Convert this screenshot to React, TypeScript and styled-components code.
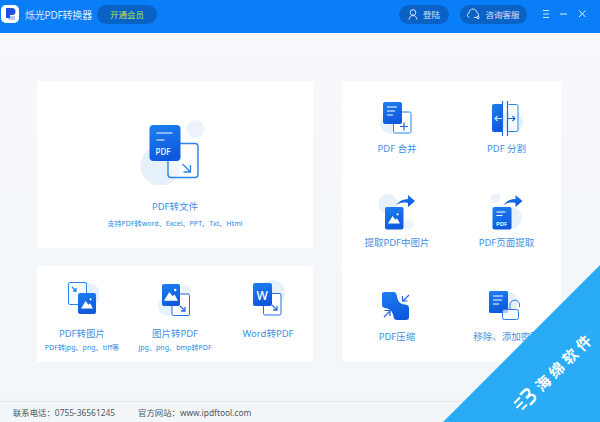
import * as React from 'react';
import styled, { createGlobalStyle } from 'styled-components';

const GlobalStyle = createGlobalStyle`
  html, body {
    margin: 0;
    padding: 0;
    background: #f3f6f9;
  }
  body {
    font-family: "Noto Sans", "Noto Sans CJK SC", sans-serif;
  }
`;

const Window = styled.div`
  background: linear-gradient(180deg, #f7f9fc 0%, #f2f6f8 100%);
  display: flex;
  flex-direction: column;
  height: 422px;
  overflow: hidden;
  position: relative;
  width: 600px;
`;

const Header = styled.header`
  align-items: center;
  background: #0a7df9;
  display: flex;
  flex: 0 0 33px;
  height: 33px;
  padding: 0 12px 5px 1px;
  box-sizing: border-box;
`;

const Logo = styled.div`
  align-items: center;
  background: #fff;
  border-radius: 5px;
  display: flex;
  height: 18px;
  justify-content: center;
  width: 18px;
`;

const Title = styled.span`
  color: #d9ebff;
  font-size: 10px;
  letter-spacing: -0.2px;
  margin-left: 6px;
  white-space: nowrap;
`;

const Pill = styled.div<{ $width: number; $ml: number }>`
  align-items: center;
  background: #0a62c6;
  border-radius: 10px;
  color: #cfe3fb;
  display: flex;
  flex: none;
  font-size: 8.5px;
  gap: 5px;
  height: 19px;
  justify-content: center;
  margin-left: ${({ $ml }) => $ml}px;
  width: ${({ $width }) => $width}px;
`;

const VipText = styled.span`
  color: #b4e63c;
`;

const WinButtons = styled.div`
  align-items: center;
  display: flex;
  gap: 8px;
  margin-left: 14px;
`;

const Main = styled.main`
  display: flex;
  flex: 1;
  gap: 29px;
  padding: 48px 39px 0 37px;
`;

const LeftColumn = styled.div`
  display: flex;
  flex-direction: column;
  gap: 18px;
  width: 276px;
`;

const Card = styled.section`
  background: #fff;
  border-radius: 3px;
`;

const HeroCard = styled(Card)`
  align-items: center;
  display: flex;
  flex-direction: column;
  height: 167px;
  padding-top: 37px;
  box-sizing: border-box;
`;

const ThreeCard = styled(Card)`
  display: grid;
  grid-template-columns: 90px 96px 90px;
  height: 96px;
  padding-top: 14px;
  box-sizing: border-box;
`;

const RightCard = styled(Card)`
  display: grid;
  grid-auto-rows: 95px;
  grid-template-columns: 110px 109px;
  height: 281px;
  padding-top: 18px;
  box-sizing: border-box;
  width: 219px;
`;

const Tile = styled.div`
  align-items: center;
  display: flex;
  flex-direction: column;
`;

const IconSlot = styled.div<{ $h: number }>`
  align-items: flex-end;
  display: flex;
  height: ${({ $h }) => $h}px;
  justify-content: center;
`;

const Label = styled.div<{ $mt: number }>`
  color: #3f90e6;
  font-size: 9.5px;
  line-height: 14px;
  margin-top: ${({ $mt }) => $mt}px;
  white-space: nowrap;
`;

const Sub = styled.div<{ $mt: number }>`
  color: #2f88ea;
  font-size: 7px;
  letter-spacing: 0.05px;
  line-height: 10px;
  margin-top: ${({ $mt }) => $mt}px;
  white-space: nowrap;
`;

const Footer = styled.footer`
  align-items: center;
  border-top: 1px solid #e3e7eb;
  color: #4f5660;
  display: flex;
  flex: 0 0 20px;
  font-size: 8.4px;
  gap: 23px;
  padding: 0 0 0 13px;
`;

const Ribbon = styled.div`
  background: #2aabf5;
  bottom: 0;
  clip-path: polygon(100% 0, 100% 100%, 0 100%);
  height: 157px;
  position: absolute;
  right: 0;
  width: 157px;
`;

const RibbonContent = styled.div`
  align-items: center;
  color: #fff;
  display: flex;
  font-family: "Noto Sans CJK SC", sans-serif;
  font-size: 15px;
  font-weight: 700;
  gap: 5px;
  left: 501px;
  letter-spacing: 4px;
  line-height: 15px;
  position: absolute;
  top: 359px;
  transform: rotate(-45deg);
  white-space: nowrap;
`;

const Grad: React.FC<{ id: string }> = ({ id }) => (
  <defs>
    <linearGradient id={id} x1="0" y1="0" x2="0.3" y2="1">
      <stop offset="0" stopColor="#1d7ff2" />
      <stop offset="1" stopColor="#1059dd" />
    </linearGradient>
  </defs>
);

const pale = '#e6f1fb';
const line = '#2a84ec';

const Arrow: React.FC<{ x: number; y: number; s?: number; color?: string }> = ({ x, y, s = 6, color = line }) => (
  <path
    d={`M${x} ${y}L${x + s} ${y + s}M${x + s} ${y + 1}V${y + s}H${x + 1}`}
    fill="none"
    stroke={color}
    strokeWidth={1.3}
  />
);

const Mountain: React.FC<{ x: number; y: number; w: number }> = ({ x, y, w }) => {
  const h = w * 0.62;
  return (
    <g fill="#fff">
      <path d={`M${x} ${y + h}L${x + w * 0.38} ${y}L${x + w * 0.62} ${y + h * 0.5}L${x + w * 0.75} ${y + h * 0.3}L${x + w} ${y + h}Z`} />
      <circle cx={x + w * 0.8} cy={y - h * 0.22} r={w * 0.09} />
    </g>
  );
};

const BendArrow: React.FC<{ id: string; dx: number }> = ({ id, dx }) => (
  <g transform={`translate(${dx} 0)`}>
    <path d="M396 205C399 201 403 199 408 199V195L415 201L408 207V203C403 202 399 203 396 205Z" fill={`url(#${id})`} />
  </g>
);

const HeroIcon = () => (
  <svg width="75" height="67" viewBox="137.5 118 75 67">
    <Grad id="hero" />
    <circle cx="160" cy="166" r="20" fill={pale} />
    <circle cx="195" cy="129" r="9" fill="#eef3fb" />
    <rect x="167.5" y="143.5" width="30" height="34" rx="3" fill="#fff" fillOpacity="0.4" stroke={line} strokeWidth="1.4" />
    <rect x="149" y="125" width="31" height="36" rx="4" fill={`url(#hero)`} />
    <path d="M156 133h16M156 140h8" stroke="#fff" strokeWidth="1.2" />
    <text x="155" y="155" fill="#fff" fontSize="8" fontWeight="500">PDF</text>
    <Arrow x={182} y={164} s={8} />
  </svg>
);

const PdfToImageIcon = () => (
  <svg width="34" height="38" viewBox="65 280 34 38">
    <Grad id="p2i" />
    <circle cx="88" cy="295" r="12" fill={pale} />
    <rect x="68.5" y="282.5" width="18" height="22" rx="1.5" fill="#f5faff" stroke={line} />
    <Arrow x={72} y={287} s={4} />
    <rect x="78" y="293" width="18" height="21" rx="2" fill={`url(#p2i)`} />
    <Mountain x={81} y={301} w={12} />
  </svg>
);

const ImageToPdfIcon = () => (
  <svg width="36" height="38" viewBox="157 280 36 38">
    <Grad id="i2p" />
    <circle cx="168" cy="306" r="10" fill={pale} />
    <circle cx="185" cy="291" r="6" fill="#eef3fb" />
    <rect x="172" y="294" width="17.5" height="21.5" rx="1.5" fill="#fff" stroke="#2a6fe0" />
    <Arrow x={180} y={306} s={5} color="#2a6fe0" />
    <rect x="162" y="284" width="18" height="22" rx="2" fill={`url(#i2p)`} />
    <Mountain x={164} y={292} w={14} />
  </svg>
);

const WordIcon = () => (
  <svg width="36" height="38" viewBox="250 280 36 38">
    <Grad id="w2p" />
    <circle cx="272" cy="293" r="13" fill={pale} />
    <rect x="263.5" y="293.5" width="17.5" height="21.5" rx="1.5" fill="#fff" stroke="#2a6fe0" />
    <Arrow x={272} y={305} s={5} color="#2a6fe0" />
    <rect x="253" y="283" width="19" height="23" rx="2" fill={`url(#w2p)`} />
    <text x="256.5" y="300" fill="#fff" fontSize="12" fontWeight="500">W</text>
  </svg>
);

const MergeIcon = () => (
  <svg width="36" height="37" viewBox="379 99 36 37">
    <Grad id="merge" />
    <circle cx="390" cy="124" r="10" fill={pale} />
    <rect x="393.5" y="112" width="17.5" height="21" rx="1.5" fill="#fff" stroke={line} />
    <path d="M400 126.5h8M404 122.5v8" stroke="#1c66d8" strokeWidth="1.2" />
    <rect x="383" y="102" width="19" height="22" rx="2" fill={`url(#merge)`} />
    <path d="M387 107h10M387 111h8M387 115h6" stroke="#fff" strokeWidth="1.2" />
  </svg>
);

const SplitIcon = () => (
  <svg width="36" height="37" viewBox="489 99 36 37">
    <Grad id="split" />
    <circle cx="512" cy="122" r="11" fill={pale} />
    <path d="M502 104h-8a2 2 0 0 0-2 2v24a2 2 0 0 0 2 2h8Z" fill={`url(#split)`} />
    <path d="M508.5 104.5h8a1.5 1.5 0 0 1 1.5 1.5v24a1.5 1.5 0 0 1-1.5 1.5h-8" fill="#fff" fillOpacity="0.6" stroke={line} />
    <path d="M502.5 101v35M507.5 101v35" stroke="#1c6be0" strokeWidth="1.2" />
    <path d="M495 118.5h7M497.5 116l-2.5 2.5 2.5 2.5" fill="none" stroke="#cfe6ff" strokeWidth="1.2" />
    <path d="M508 118.5h7M512.5 116l2.5 2.5-2.5 2.5" fill="none" stroke="#1c6be0" strokeWidth="1.2" />
  </svg>
);

const ExtractImageIcon = () => (
  <svg width="36" height="37" viewBox="379 194 36 37">
    <Grad id="ei" />
    <circle cx="388" cy="204" r="10" fill={pale} />
    <circle cx="408" cy="225" r="5" fill="#eef3fb" />
    <rect x="385" y="207" width="18.5" height="22.5" rx="2" fill={`url(#ei)`} />
    <Mountain x={388} y={216} w={12} />
    <BendArrow id="ei" dx={0} />
  </svg>
);

const ExtractPageIcon = () => (
  <svg width="36" height="37" viewBox="488.5 194 36 37">
    <Grad id="ep" />
    <circle cx="510" cy="218" r="11" fill={pale} />
    <circle cx="495" cy="198" r="5" fill="#eef3fb" />
    <rect x="492" y="207" width="19" height="22.5" rx="2" fill={`url(#ep)`} />
    <path d="M496 212h9M496 215.5h6" stroke="#fff" strokeWidth="1" />
    <text x="495.5" y="225.5" fill="#fff" fontSize="6" fontWeight="600">PDF</text>
    <BendArrow id="ep" dx={107} />
  </svg>
);

const CompressIcon = () => (
  <svg width="36" height="33" viewBox="379 289 36 33">
    <Grad id="cp" />
    <path d="M384 292H393C396 292 396.5 294 397 296C397.5 301 400 304 405 304.5C408 305 409 306 409 308V317C409 319 408 320 406 320H397C395 320 394 319 393.5 317C393 312 390 308.5 385 308C383 307.5 382 306.5 382 305V294C382 293 383 292 384 292Z" fill={`url(#cp)`} />
    <path d="M409 295l-6 6M402.5 296v5h5" fill="none" stroke="#2a5fe0" strokeWidth="1.2" />
    <path d="M384 317l5.5-5.5M384.5 310.5h5.5v5.5" fill="none" stroke="#2a5fe0" strokeWidth="1.2" />
  </svg>
);

const UnlockIcon = () => (
  <svg width="38" height="33" viewBox="487 289 38 33">
    <Grad id="ul" />
    <circle cx="506" cy="302" r="11" fill={pale} />
    <rect x="488" y="291" width="19" height="22" rx="1.5" fill={`url(#ul)`} />
    <path d="M492 296h10M492 300h9M492 304h6" stroke="#fff" strokeWidth="1.2" />
    <rect x="501.5" y="309.5" width="16" height="10" rx="2" fill="#fff" fillOpacity="0.65" stroke="#2a7ce6" />
    <path d="M509 309v-4a4.800 4.800 0 0 1 9.600 0v2" fill="none" stroke="#2a7ce6" />
  </svg>
);

const LogoIcon = () => (
  <svg width="13" height="14" viewBox="0 0 13 14">
    <path d="M4 9h7v4H5.500A1.500 1.500 0 0 1 4 11.500Z" fill="#b9c6f5" />
    <path d="M2 1h6a3.500 3.500 0 0 1 0 7H6v3H2Z" fill="#1f4fdd" />
  </svg>
);

const UserIcon = () => (
  <svg width="10" height="11" viewBox="0 0 10 11" fill="none" stroke="#d6e8fd" strokeWidth="1">
    <circle cx="5" cy="3.5" r="2.8" />
    <path d="M1 10.500c.5-2.500 2-4 4-4s3.500 1.500 4 4" />
  </svg>
);

const HeadsetIcon = () => (
  <svg width="13" height="12" viewBox="0 0 13 12" fill="none" stroke="#d6e8fd" strokeWidth="1">
    <path d="M2.500 9.500C1 9 .5 7.800 .5 7c0-1 .6-1.800 1.500-2.200C2.300 2.500 4 1 6 1s3.700 1.500 4 3.800c.9.400 1.500 1.200 1.500 2.200 0 1.500-1 2.500-2.500 2.500H7" />
    <circle cx="11" cy="9.5" r="1.2" />
  </svg>
);

const MenuIcon = () => (
  <svg width="10" height="10" viewBox="0 0 10 10" stroke="#cfe3fb" strokeWidth="1">
    <path d="M2 1.500h6M2 5h6M2 8.500h6" />
  </svg>
);

const MinIcon = () => (
  <svg width="10" height="10" viewBox="0 0 10 10" stroke="#e3f0ff" strokeWidth="1">
    <path d="M1 5h7" />
  </svg>
);

const CloseIcon = () => (
  <svg width="10" height="10" viewBox="0 0 10 10" stroke="#e3f0ff" strokeWidth="1">
    <path d="M2 1.500l6.500 6.500M8.500 1.500L2 8" />
  </svg>
);

// sponge mark of the corner ribbon, stripes on the left and a blob on the right
const SpongeMark = () => (
  <svg width="24" height="24" viewBox="0 0 24 24" fill="#fff">
    <path d="M2 6h8v2H2ZM0 11h9v2H0ZM3 16h7v2H3Z" />
    <path d="M12 4h6c3 0 4.500 1.500 4.500 3.500 0 1.800-1 3-2.500 4.500 1.500 1 2.500 2 2.500 4 0 2.500-2 4.500-4.500 4.500H12v-2.500h5.500c1.500 0 2.500-.8 2.500-2s-1-2.500-2.500-2.500H14v-3h3.500c1.200 0 2.500-1 2.500-2.200S18.800 6.500 17.500 6.500H12Z" />
  </svg>
);

const threeTiles = [
  { label: 'PDF转图片', sub: 'PDF转jpg、png、tiff等', icon: <PdfToImageIcon /> },
  { label: '图片转PDF', sub: 'jpg、png、bmp转PDF', icon: <ImageToPdfIcon /> },
  { label: 'Word转PDF', sub: '', icon: <WordIcon /> },
];

const rightTiles = [
  { label: 'PDF 合并', icon: <MergeIcon />, h: 37, mt: 6 },
  { label: 'PDF 分割', icon: <SplitIcon />, h: 37, mt: 6 },
  { label: '提取PDF中图片', icon: <ExtractImageIcon />, h: 37, mt: 5 },
  { label: 'PDF页面提取', icon: <ExtractPageIcon />, h: 37, mt: 5 },
  { label: 'PDF压缩', icon: <CompressIcon />, h: 33, mt: 8 },
  { label: '移除、添加密码', icon: <UnlockIcon />, h: 33, mt: 8 },
];

export default function App() {
  return (
    <Window>
      <GlobalStyle />
      <Header>
        <Logo><LogoIcon /></Logo>
        <Title>烁光PDF转换器</Title>
        <Pill $width={60} $ml={5}><VipText>开通会员</VipText></Pill>
        <Pill $width={50} $ml={242}><UserIcon />登陆</Pill>
        <Pill $width={67} $ml={11}><HeadsetIcon />咨询客服</Pill>
        <WinButtons>
          <MenuIcon />
          <MinIcon />
          <CloseIcon />
        </WinButtons>
      </Header>
      <Main>
        <LeftColumn>
          <HeroCard>
            <HeroIcon />
            <Label $mt={15}>PDF转文件</Label>
            <Sub $mt={5}>支持PDF转word、Excel、PPT、Txt、Html</Sub>
          </HeroCard>
          <ThreeCard>
            {threeTiles.map((t) => (
              <Tile key={t.label}>
                <IconSlot $h={38}>{t.icon}</IconSlot>
                <Label $mt={9}>{t.label}</Label>
                {t.sub && <Sub $mt={2}>{t.sub}</Sub>}
              </Tile>
            ))}
          </ThreeCard>
        </LeftColumn>
        <RightCard>
          {rightTiles.map((t) => (
            <Tile key={t.label}>
              <IconSlot $h={t.h}>{t.icon}</IconSlot>
              <Label $mt={t.mt}>{t.label}</Label>
            </Tile>
          ))}
        </RightCard>
      </Main>
      <Footer>
        <span>联系电话：0755-36561245</span>
        <span>官方网站：www.ipdftool.com</span>
      </Footer>
      <Ribbon />
      <RibbonContent>
        <SpongeMark />
        海绵软件
      </RibbonContent>
    </Window>
  );
}
